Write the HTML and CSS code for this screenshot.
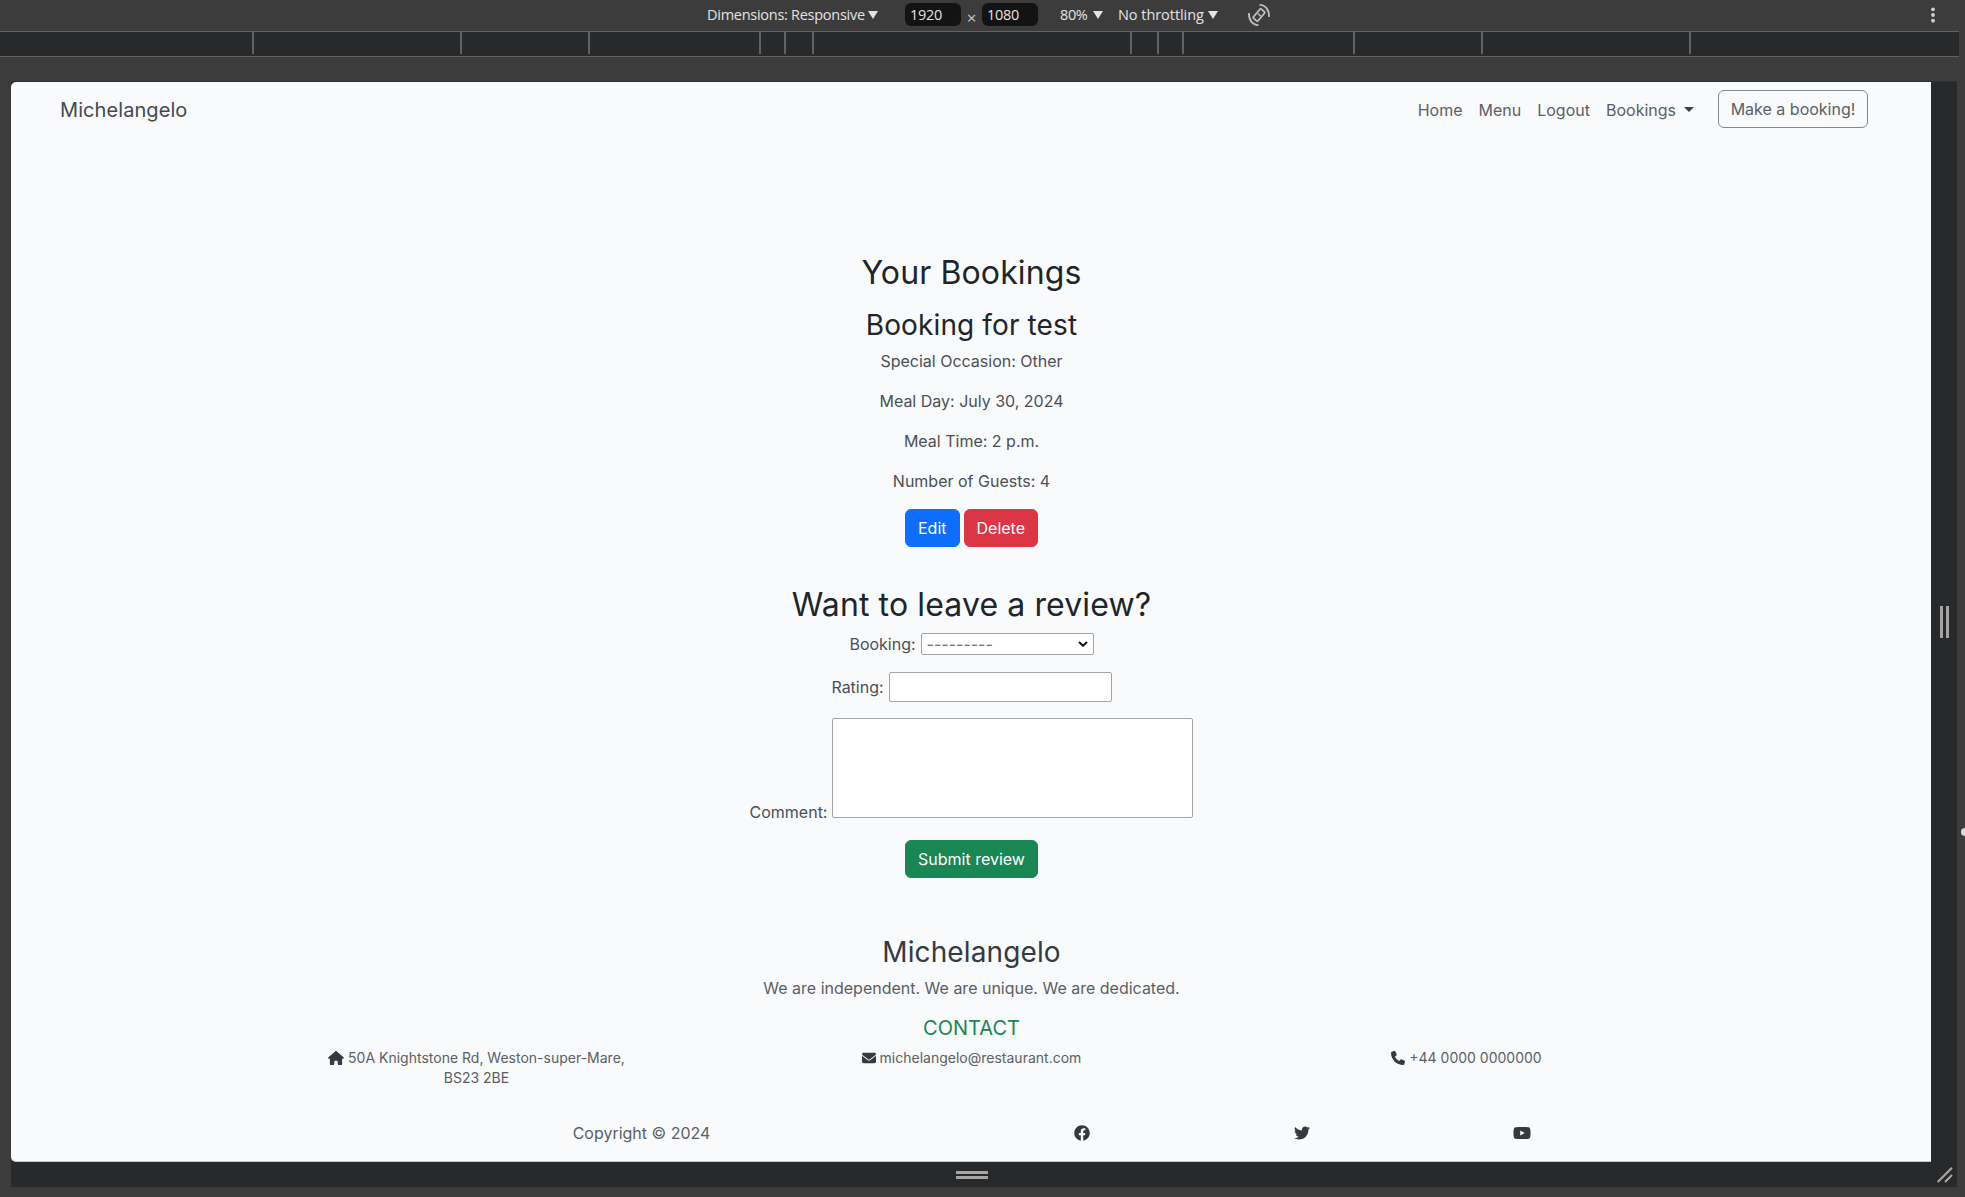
FILE: index.html
```html
<!DOCTYPE html>
<html lang="en">
<head>
<meta charset="utf-8">
<title>Michelangelo - Your Bookings</title>
<link rel="stylesheet" href="styles.css">
</head>
<body>
<div class="toolbar">
  <span class="dimensions">Dimensions: Responsive</span><i class="arrow"></i>
  <span class="size-box">1920</span><span class="times">×</span><span class="size-box">1080</span>
  <span class="zoom">80%</span><i class="arrow"></i>
  <span class="throttle">No throttling</span><i class="arrow"></i>
  <svg class="rotate" viewBox="0 0 24 24" fill="none" stroke="#bdbdbd" stroke-width="1.8"><rect x="9" y="6" width="6" height="12" rx="1" transform="rotate(40 12 12)"/><path d="M10.800 10.500l3 2.800" stroke-width="1.500"/><path d="M12.500 1.800C18.500 2 22.500 7 22 14M11.500 22.200C5.500 22 1.500 17 2 10"/></svg>
  <svg class="kebab" viewBox="0 0 4 16" fill="#d0d0d0"><circle cx="2" cy="2.300" r="1.900"/><circle cx="2" cy="8" r="1.900"/><circle cx="2" cy="13.700" r="1.900"/></svg>
</div>
<div class="ruler">
  <i class="seg s254"></i><i class="seg s208"></i><i class="seg s128"></i><i class="seg s171"></i><i class="seg s25"></i><i class="seg s28"></i><i class="seg s318"></i><i class="seg s27"></i><i class="seg s25"></i><i class="seg s171"></i><i class="seg s128"></i><i class="seg s208"></i>
</div>
<div class="stage">
  <div class="page">
    <nav class="navbar">
      <a class="brand">Michelangelo</a>
      <div class="links">
        <a>Home</a><a>Menu</a><a>Logout</a><a>Bookings<i class="caret"></i></a>
        <a class="btn outline">Make a booking!</a>
      </div>
    </nav>
    <main>
      <h2>Your Bookings</h2>
      <h3>Booking for test</h3>
      <p>Special Occasion: Other</p>
      <p>Meal Day: July 30, 2024</p>
      <p>Meal Time: 2 p.m.</p>
      <p>Number of Guests: 4</p>
      <div class="actions"><a class="btn primary">Edit</a><a class="btn danger">Delete</a></div>
      <h2 class="review-title">Want to leave a review?</h2>
      <div class="field booking"><label>Booking:</label><div class="select"><span>---------</span><svg viewBox="0 0 10 6" fill="none" stroke="#111" stroke-width="2"><path d="M1 .9l4 3.800L9 .9"/></svg></div></div>
      <div class="field rating"><label>Rating:</label><div class="input"></div></div>
      <div class="field comment"><label>Comment:</label><div class="textarea"></div></div>
      <div class="submit"><a class="btn success">Submit review</a></div>
    </main>
    <footer>
      <h3>Michelangelo</h3>
      <p>We are independent. We are unique. We are dedicated.</p>
      <h5>CONTACT</h5>
      <div class="contacts">
        <div><svg class="house" viewBox="0 0 576 512"><path d="M575.8 255.5c0 18-15 32.100-32 32.100h-32l.7 160.200c0 2.700-.2 5.400-.5 8.100V472c0 22.100-17.900 40-40 40H392c-22.100 0-40-17.900-40-40V384c0-17.700-14.300-32-32-32H256c-17.700 0-32 14.300-32 32v88c0 22.100-17.900 40-40 40H104c-22.100 0-40-17.900-40-40V287.600H32c-18 0-32-14-32-32.100c0-9 3-17 10-24L266.400 8c7-7 15-8 22-8s15 2 21 7L564.800 231.500c8 7 12 15 11 24z"/></svg> 50A Knightstone Rd, Weston-super-Mare,<br>BS23 2BE</div>
        <div><svg class="small" viewBox="0 0 512 512"><path d="M48 64C21.500 64 0 85.500 0 112c0 15.100 7.100 29.300 19.200 38.400L236.800 313.600c11.400 8.500 27 8.500 38.400 0L492.800 150.400c12.100-9.100 19.200-23.300 19.200-38.400c0-26.500-21.500-48-48-48H48zM0 176V384c0 35.300 28.700 64 64 64H448c35.300 0 64-28.700 64-64V176L294.400 339.200c-22.800 17.100-54 17.100-76.800 0L0 176z"/></svg> michelangelo@restaurant.com</div>
        <div><svg class="small" viewBox="0 0 512 512"><path d="M164.900 24.600c-7.700-18.600-28-28.500-47.400-23.200l-88 24C12.100 30.200 0 46 0 64C0 311.400 200.600 512 448 512c18 0 33.800-12.100 38.600-29.500l24-88c5.300-19.400-4.600-39.700-23.200-47.400l-96-40c-16.300-6.800-35.200-2.100-46.300 11.600L304.700 368C234.300 334.700 177.300 277.700 144 207.300L193.300 167c13.700-11.200 18.400-30 11.600-46.300l-40-96z"/></svg> +44 0000 0000000</div>
      </div>
      <div class="social">
        <div>Copyright © 2024</div>
        <div><svg viewBox="0 0 512 512"><path d="M504 256C504 119 393 8 256 8S8 119 8 256c0 123.780 90.690 226.380 209.250 245V327.690h-63V256h63v-54.640c0-62.150 37-96.480 93.670-96.480 27.140 0 55.520 4.840 55.520 4.840v61h-31.280c-30.800 0-40.410 19.120-40.410 38.730V256h68.780l-11 71.690h-57.780V501C413.310 482.380 504 379.780 504 256z"/></svg></div>
        <div><svg viewBox="0 0 512 512"><path d="M459.370 151.716c.325 4.548.325 9.097.325 13.645 0 138.720-105.583 298.558-298.558 298.558-59.452 0-114.680-17.219-161.137-47.106 8.447.974 16.568 1.299 25.340 1.299 49.055 0 94.213-16.568 130.274-44.832-46.132-.975-84.792-31.188-98.112-72.772 6.498.974 12.995 1.624 19.818 1.624 9.421 0 18.843-1.300 27.614-3.573-48.081-9.747-84.143-51.980-84.143-102.985v-1.299c13.969 7.797 30.214 12.670 47.431 13.319-28.264-18.843-46.781-51.005-46.781-87.391 0-19.492 5.197-37.360 14.294-52.954 51.655 63.675 129.300 105.258 216.365 109.807-1.624-7.797-2.599-15.918-2.599-24.040 0-57.828 46.782-104.934 104.934-104.934 30.213 0 57.502 12.670 76.670 33.137 23.715-4.548 46.456-13.320 66.599-25.340-7.798 24.366-24.366 44.833-46.132 57.827 21.117-2.273 41.584-8.122 60.426-16.243-14.292 20.791-32.161 39.308-52.628 54.253z"/></svg></div>
        <div><svg class="youtube" viewBox="0 0 576 512"><path d="M549.655 124.083c-6.281-23.650-24.787-42.276-48.284-48.597C458.781 64 288 64 288 64S117.220 64 74.629 75.486c-23.497 6.322-42.003 24.947-48.284 48.597-11.412 42.867-11.412 132.305-11.412 132.305s0 89.438 11.412 132.305c6.281 23.650 24.787 41.500 48.284 47.821C117.220 448 288 448 288 448s170.780 0 213.371-11.486c23.497-6.321 42.003-24.171 48.284-47.821 11.412-42.867 11.412-132.305 11.412-132.305s0-89.438-11.412-132.305zm-317.510 213.508V175.185l142.739 81.205-142.739 81.201z"/></svg></div>
      </div>
    </footer>
  </div>
  <div class="handle-right"><i></i><i></i></div>
  <div class="handle-bottom"><i></i><i></i></div>
  <svg class="handle-corner" viewBox="0 0 16 16" stroke="#a9aaa9" stroke-width="2" fill="none"><path d="M.7 15L15 .7M8 15l7-7"/></svg>
</div>
<i class="edge-dot"></i>
</body>
</html>
```
FILE: styles.css
```css
* { box-sizing: border-box; }
body { margin: 0; width: 1965px; height: 1197px; overflow: hidden; position: relative; background: #3c3c3c; font: 16px/24px Inter, sans-serif; color: #4b5054; }
i { display: block; }
h2, h3, h5, p { margin: 0; }
.toolbar { height: 31px; display: flex; align-items: center; padding-left: 707px; font: 14.500px/26px "Open Sans", sans-serif; color: #e3e3e3; white-space: nowrap; }
.toolbar > * { flex: none; }
.toolbar span { height: 28px; }
.dimensions { width: 161px; letter-spacing: -.27px; }
.arrow { border: 5px solid transparent; border-top: 8px solid #e3e3e3; border-bottom: 0; width: 10px; margin-top: -2px; }
.toolbar .size-box { width: 56px; height: 23px; background: #131313; border-radius: 6px; padding-left: 5px; line-height: 23px; letter-spacing: -.3px; margin-top: -2px; }
.arrow + .size-box { margin-left: 27px; }
.times { width: 21px; text-align: center; font-size: 17px; padding-top: 3px; color: #c7c7c7; }
.zoom { width: 33px; margin-left: 22px; letter-spacing: -.4px; }
.throttle { width: 90px; margin-left: 15px; letter-spacing: -.05px; }
.rotate { width: 24px; height: 24px; margin-left: 29px; margin-top: -2px; }
.kebab { width: 4px; height: 16px; margin-left: auto; margin-right: 30px; margin-top: -2px; }
.ruler { width: 1959px; height: 26px; display: flex; border: solid #636363; border-width: 1px 0; background: #28292a; }
.seg { height: 22px; border-right: 2px solid #636363; flex: none; }
.s254 { width: 254px; } .s208 { width: 208px; } .s128 { width: 128px; } .s171 { width: 171px; }
.s25 { width: 25px; } .s27 { width: 27px; } .s28 { width: 28px; } .s318 { width: 318px; }
.stage { margin: 24px 0 0 11px; width: 1946px; height: 1106px; padding-top: 1px; display: grid; grid-template: 1080px 25px / 1920px 26px; background: linear-gradient(#303030, #303030) top/100% 1px no-repeat, #28292a; }
.page { background: #f8fafc; border-radius: 5px 0 0 5px; border-bottom: 1px solid #c5c6c7; }
.handle-right { display: flex; gap: 3px; align-items: center; justify-content: center; }
.handle-right i { width: 3px; height: 32px; background: #a3a4a3; }
.handle-bottom { display: flex; flex-direction: column; gap: 2px; align-items: center; justify-content: center; padding-left: 1px; }
.handle-bottom i { width: 32px; height: 3px; background: #a3a4a3; }
.handle-corner { width: 16px; height: 16px; margin: 5px 0 0 6px; }
.edge-dot { position: absolute; right: -4px; top: 828px; width: 8px; height: 8px; border-radius: 50%; background: #ddd; }
.navbar { display: flex; justify-content: space-between; padding: 8px 63px 8px 49px; height: 54px; align-items: center; }
.brand { font-size: 20px; color: #44494d; padding-top: 2px; letter-spacing: .08px; }
.links { display: flex; align-items: center; color: #5c6062; }
.links > a { padding: 1px 8px 0; }
.caret { display: inline-block; border: 5px solid transparent; border-top-color: #3c4043; border-bottom: 0; margin-left: 8px; vertical-align: 4px; }
.btn { height: 38px; border: 1px solid; border-radius: 6px; line-height: 24px; display: block; color: #fff; }
a.btn, .links > a.btn { padding: 6px 12px; }
.links > a.btn { width: 150px; padding: 6px 0; text-align: center; margin-left: 16px; color: #5c6062; border-color: #858789; }
.primary { background: #0d6efd; border-color: #0d6efd; }
.danger { background: #dc3545; border-color: #dc3545; }
.success { background: #198754; border-color: #198754; }
main, footer { text-align: center; padding-left: 1px; }
main { padding-top: 118px; height: 799px; }
h2 { font-size: 32px; font-weight: 400; line-height: 38px; color: #212529; margin-bottom: 16px; letter-spacing: .12px; }
h3 { font-size: 28px; font-weight: 400; line-height: 34px; color: #212529; margin-bottom: 7px; letter-spacing: .12px; }
p { margin-bottom: 16px; }
.actions { display: flex; gap: 4px; justify-content: center; }
h2.review-title { margin: 39px 0 8px; }
.field { display: flex; justify-content: center; gap: 5px; }
.booking { height: 24px; align-items: center; }
.select { display: flex; align-items: center; justify-content: space-between; width: 173px; height: 22px; background: #fff; border: 1px solid #a5a5a5; border-radius: 2px; padding: 0 5px; color: #6d7174; }
.select svg { width: 10px; height: 6px; }
.rating { margin-top: 16px; height: 30px; align-items: center; }
.input { width: 223px; height: 30px; background: #fff; border: 1px solid #a5a5a5; border-radius: 2px; }
.comment { margin-top: 16px; height: 100px; align-items: flex-end; }
.comment label { margin-bottom: -6px; }
.textarea { width: 361px; height: 100px; background: #fff; border: 1px solid #a5a5a5; border-radius: 2px; }
.submit { display: flex; justify-content: center; margin-top: 22px; }
footer h3 { color: #343a40; }
footer { color: #5c6062; }
h5 { font-size: 20px; font-weight: 400; line-height: 24px; color: #198754; margin-bottom: 8px; }
.contacts { display: grid; grid-template-columns: repeat(3, 495px); justify-content: center; font-size: 14px; line-height: 20px; }
footer svg { fill: #343a40; width: 16px; height: 16px; vertical-align: -2px; }
footer .house { width: 16px; height: 14px; }
footer .small { width: 14px; height: 14px; }
footer .youtube { width: 18px; height: 16px; }
.social { display: grid; grid-template-columns: 660px repeat(3, 220px); justify-content: center; margin-top: 33px; }
```
